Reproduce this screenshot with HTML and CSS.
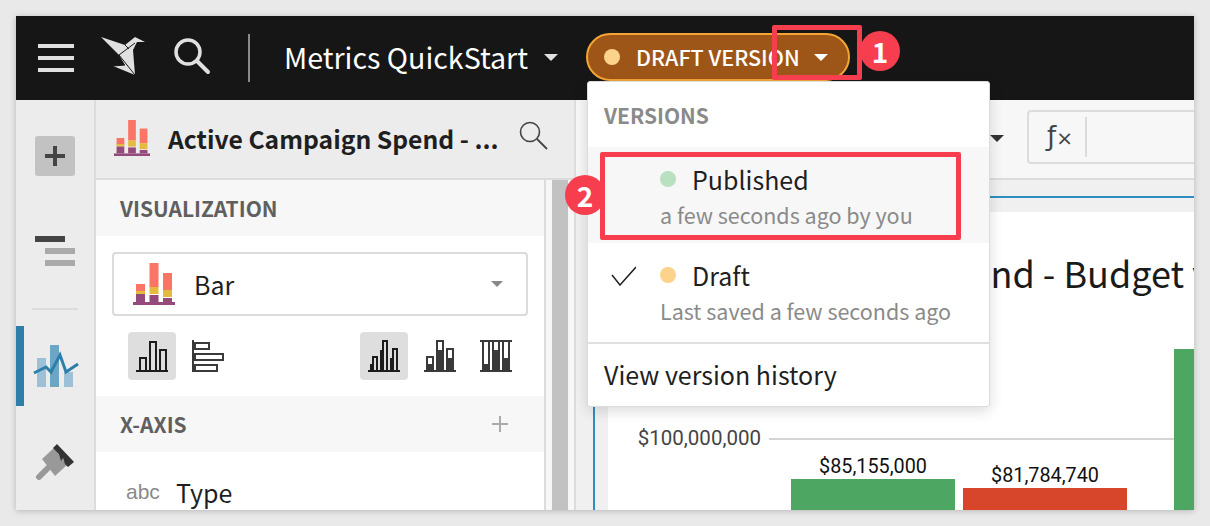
FILE: index.html
```html
<!doctype html>
<html lang="en-US">
<head>
  <meta name="viewport" content="width=device-width, initial-scale=1" charset="utf-8">
  <title>Metrics QuickStart</title>
  <link rel="stylesheet" href="styles.css">
</head>
<body>
  <svg class="defs" width="0" height="0">
    <symbol id="bar-logo" viewBox="0 0 42 42">
      <rect x="3" y="21" width="9" height="8" fill="#fb7566"/>
      <rect x="3" y="28" width="9" height="3" fill="#e3bc3d"/>
      <rect x="3" y="31" width="9" height="8" fill="#954a7c"/>
      <rect x="16.500" y="0" width="9" height="24" fill="#fb7566"/>
      <rect x="16.500" y="24" width="9" height="7" fill="#e3bc3d"/>
      <rect x="16.500" y="32" width="9" height="7" fill="#954a7c"/>
      <rect x="30" y="10" width="9" height="17" fill="#fb7566"/>
      <rect x="30" y="27" width="9" height="7" fill="#e3bc3d"/>
      <rect x="30" y="35" width="9" height="4" fill="#954a7c"/>
      <rect x="0" y="39" width="42" height="3" fill="#954a7c"/>
    </symbol>
  </svg>

  <div class="app">
    <header class="topbar">
      <div class="burger"><span></span><span></span><span></span></div>
      <svg class="logo" width="46" height="40" viewBox="0 0 46 40">
        <polygon points="1,1 25,9 35,1 45,6 37,6 33,14 35,39 13,30 25,29 19,19" fill="#e0e0e0"/>
        <path d="M19 19 L35 7 M19 19 L35 39 M13 30 L25 29 M25 9 L29 13" stroke="#161616" stroke-width="1" fill="none"/>
      </svg>
      <svg class="top-search" width="40" height="40" viewBox="0 0 40 40">
        <circle cx="16" cy="16" r="12" fill="none" stroke="#e0e0e0" stroke-width="3.500"/>
        <line x1="25" y1="25" x2="36" y2="36" stroke="#e0e0e0" stroke-width="4" stroke-linecap="round"/>
      </svg>
      <div class="top-divider"></div>
      <div class="doc-title">Metrics QuickStart</div>
      <span class="caret caret-light"></span>
      <div class="draft-pill">
        <span class="dot dot-draft"></span>
        <span class="pill-label">DRAFT VERSION</span>
        <span class="caret caret-white"></span>
      </div>
    </header>

    <div class="workspace">
      <nav class="rail">
        <div class="rail-add">
          <svg width="20" height="20" viewBox="0 0 20 20"><path d="M8 0h4v8h8v4h-8v8H8v-8H0V8h8z" fill="#444"/></svg>
        </div>
        <div class="rail-lines"><span></span><span></span><span></span></div>
        <div class="rail-rule"></div>
        <div class="rail-chart">
          <svg width="46" height="44" viewBox="0 0 46 44">
            <rect x="4" y="14" width="9" height="29" fill="#9cc0d5"/>
            <rect x="17" y="1" width="9" height="42" fill="#6ba6c5"/>
            <rect x="31" y="28" width="9" height="15" fill="#9cc0d5"/>
            <polyline points="1,29 13,23 18,28 27,11 33,28 45,20" fill="none" stroke="#2d7fa9" stroke-width="3"/>
          </svg>
        </div>
        <div class="rail-brush">
          <svg width="40" height="40" viewBox="0 0 40 40">
            <line x1="4" y1="34" x2="13" y2="25" stroke="#999" stroke-width="6" stroke-linecap="round"/>
            <polygon points="7,16 20,4 32,22 20,33" fill="#999"/>
            <polygon points="22,1 39,19 33,24 30,21 28,15 26,18 24,11 18,5" fill="#333"/>
          </svg>
        </div>
      </nav>

      <section class="panel">
        <div class="panel-head">
          <svg class="panel-logo" width="36" height="36"><use href="#bar-logo"/></svg>
          <div class="panel-title">Active Campaign Spend - ...</div>
          <svg class="panel-search" width="30" height="30" viewBox="0 0 30 30">
            <circle cx="12" cy="12" r="9.500" fill="none" stroke="#444" stroke-width="1.600"/>
            <line x1="19" y1="19" x2="29" y2="29" stroke="#444" stroke-width="1.800"/>
          </svg>
        </div>
        <div class="panel-body">
          <div class="config">
            <h3 class="section-head">VISUALIZATION</h3>
            <div class="chart-select">
              <svg width="42" height="42"><use href="#bar-logo"/></svg>
              <span class="select-label">Bar</span>
              <span class="caret caret-grey"></span>
            </div>
            <div class="variant-row">
              <div class="variant-group">
                <div class="variant active">
                  <svg width="32" height="32" viewBox="0 0 32 32"><path d="M0 30h32v2H0zM3 30V17h8v13h-2V19H5v11zM13 30V1h8v29h-2V3h-4v27zM23 30V9h8v21h-2V11h-4v19z" fill="#1c1c1c"/></svg>
                </div>
                <div class="variant">
                  <svg width="32" height="32" viewBox="0 0 32 32"><path fill-rule="evenodd" d="M0 0h2v32H0zM2 2h16v8H2zM4 4v4h12V4zM2 13h30v8H2zM4 15v4h26v-4zM2 24h24v8H2zM4 26v4h20v-4z" fill="#3a3a3a"/></svg>
                </div>
              </div>
              <div class="variant-group">
                <div class="variant active">
                  <svg width="32" height="32" viewBox="0 0 32 32"><path fill-rule="evenodd" d="M0 30h32v2H0zM2 24h2v6H2zM4 16h6v14H4zM6 18v12h2V18zM12 10h2v20h-2zM14 0h6v30h-6zM16 2v28h2V2zM22 18h2v12h-2zM24 8h6v22h-6zM26 10v20h2V10z" fill="#1c1c1c"/></svg>
                </div>
                <div class="variant">
                  <svg width="32" height="32" viewBox="0 0 32 32"><path fill-rule="evenodd" d="M0 30h32v2H0zM2 16h8v14H2zM4 18v6h4v-6zM12 0h8v30h-8zM14 2v8h4V2zM22 8h8v22h-8zM24 10v8h4v-8z" fill="#3a3a3a"/></svg>
                </div>
                <div class="variant">
                  <svg width="32" height="32" viewBox="0 0 32 32"><path fill-rule="evenodd" d="M0 0h32v2H0zM0 30h32v2H0zM2 2h8v28H2zM4 2v22h4V2zM12 2h8v28h-8zM14 2v8h4V2zM22 2h8v28h-8zM24 2v16h4V2z" fill="#3a3a3a"/></svg>
                </div>
              </div>
            </div>
            <h3 class="section-head">X-AXIS<span class="add-field"></span></h3>
            <div class="field-row">
              <span class="field-type">abc</span>
              <span class="field-name">Type</span>
            </div>
          </div>
          <div class="scroll-track"><div class="scroll-thumb"></div></div>
        </div>
      </section>

      <main class="main">
        <div class="formula-bar">
          <span class="caret caret-dark"></span>
          <div class="formula-box">
            <span class="fx">&#402;<small>&times;</small></span>
            <span class="fx-rule"></span>
          </div>
        </div>
        <div class="sheet">
          <div class="canvas">
            <svg class="chart" width="586" height="298" viewBox="608 212 586 298">
              <text class="chart-title" x="638" y="288">Active Campaign Spend - Budget vs Actual</text>
              <line x1="769" y1="439" x2="1174" y2="439" stroke="#d4d4d4" stroke-width="2"/>
              <text class="axis-label" x="761" y="445" text-anchor="end">$100,000,000</text>
              <rect x="791" y="479" width="164" height="31" fill="#4da661"/>
              <rect x="963" y="488" width="164" height="22" fill="#d7462b"/>
              <rect x="1174" y="349" width="20" height="161" fill="#4da661"/>
              <text class="bar-label" x="873" y="473" text-anchor="middle">$85,155,000</text>
              <text class="bar-label" x="1045" y="482" text-anchor="middle">$81,784,740</text>
            </svg>
          </div>
        </div>
      </main>
    </div>

    <div class="version-menu">
      <div class="menu-head">VERSIONS</div>
      <div class="menu-item selected">
        <div class="item-main"><span class="dot dot-published"></span><span class="item-name">Published</span></div>
        <div class="item-sub">a few seconds ago by you</div>
      </div>
      <div class="menu-item menu-item-last">
        <div class="item-main">
          <svg class="check" width="26" height="24" viewBox="0 0 26 24"><path d="M2 13l8 10L26 5" fill="none" stroke="#222" stroke-width="1.500"/></svg>
          <span class="dot dot-draft"></span><span class="item-name">Draft</span>
        </div>
        <div class="item-sub">Last saved a few seconds ago</div>
      </div>
      <div class="menu-link">View version history</div>
    </div>

    <!-- callouts from the doc author -->
    <div class="callout-box box-one"></div>
    <div class="callout-num num-one">1</div>
    <div class="callout-box box-two"></div>
    <div class="callout-num num-two">2</div>
  </div>
</body>
</html>
```

FILE: styles.css
```css
:root {
  --font-face: "Noto Sans CJK SC", "Noto Sans", sans-serif;
  --rule: #dcdcdc;
  --callout: #f73e4e;
}

html, body {
  margin: 0;
  height: 100%;
  overflow: hidden;
}

body {
  background-color: #e9e9e9;
  padding: 16px;
  box-sizing: border-box;
  font-family: var(--font-face);
  color: #1f1f1f;
}

.defs {
  position: absolute;
}

.app {
  position: relative;
  width: 1178px;
  height: 494px;
  display: flex;
  flex-direction: column;
  overflow: hidden;
  background: #fff;
  box-shadow: 0 1px 6px rgba(0, 0, 0, 0.22);
}

/* top bar */
.topbar {
  flex: 0 0 84px;
  display: flex;
  align-items: center;
  background: #161616;
  padding-left: 22px;
}

.burger {
  width: 36px;
  display: flex;
  flex-direction: column;
  gap: 8px;
}

.burger span {
  height: 4px;
  background: #e0e0e0;
}

.logo {
  margin-left: 26px;
  margin-top: -4px;
}

.top-search {
  margin-left: 26px;
  margin-top: -4px;
}

.top-divider {
  width: 2px;
  height: 48px;
  margin-left: 36px;
  background: #8a8a8a;
}

.doc-title {
  margin-left: 34px;
  margin-top: -3px;
  color: #fff;
  font-size: 28.600px;
  line-height: 40px;
  white-space: nowrap;
}

.caret {
  display: inline-block;
  flex: none;
  width: 0;
  height: 0;
  border-left: 7px solid transparent;
  border-right: 7px solid transparent;
  border-top: 7px solid #fff;
}

.caret-light {
  margin-left: 16px;
  margin-top: -2px;
  border-top-color: #e0e0e0;
}

.draft-pill {
  flex: none;
  margin-left: 28px;
  margin-top: -2px;
  height: 48px;
  width: 264px;
  box-sizing: border-box;
  display: flex;
  align-items: center;
  padding-left: 16px;
  border: 2px solid #f4a536;
  border-radius: 24px;
  background: #9e5618;
}

.pill-label {
  margin-left: 16px;
  color: #fff;
  font-size: 21.500px;
  font-weight: 500;
  line-height: 30px;
  white-space: nowrap;
}

.caret-white {
  margin-left: 14px;
}

.dot {
  flex: none;
  width: 16px;
  height: 16px;
  border-radius: 50%;
}

.dot-draft {
  background: #fdd28a;
}

.dot-published {
  background: #b9e0bf;
}

.workspace {
  flex: 1;
  display: flex;
  min-height: 0;
}

/* left rail */
.rail {
  flex: 0 0 80px;
  box-sizing: border-box;
  display: flex;
  flex-direction: column;
  align-items: center;
  background: #ececec;
  border-right: 2px solid var(--rule);
}

.rail-add {
  width: 40px;
  height: 40px;
  margin-top: 36px;
  display: flex;
  align-items: center;
  justify-content: center;
  background: #c2c2c2;
  border-radius: 3px;
}

.rail-lines {
  width: 40px;
  margin-top: 60px;
  display: flex;
  flex-direction: column;
  gap: 6px;
}

.rail-lines span {
  width: 30px;
  height: 6px;
  margin-left: 10px;
  background: #aaa;
}

.rail-lines span:first-child {
  margin-left: 0;
  background: #444;
}

.rail-rule {
  width: 46px;
  height: 2px;
  margin-top: 42px;
  background: var(--rule);
}

.rail-chart {
  align-self: stretch;
  height: 80px;
  margin-top: 16px;
  box-sizing: border-box;
  display: flex;
  align-items: center;
  padding-left: 9px;
  border-left: 8px solid #2d7fa9;
}

.rail-brush {
  margin-top: 37px;
}

/* data panel */
.panel {
  flex: 0 0 480px;
  min-width: 0;
  box-sizing: border-box;
  display: flex;
  flex-direction: column;
  border-right: 2px solid var(--rule);
}

.panel-head {
  flex: 0 0 80px;
  box-sizing: border-box;
  display: flex;
  align-items: center;
  padding-left: 18px;
  padding-bottom: 2px;
  background: #ececec;
  border-bottom: 2px solid var(--rule);
}

.panel-title {
  margin-left: 18px;
  font-size: 24.700px;
  font-weight: 700;
  line-height: 36px;
  white-space: nowrap;
}

.panel-search {
  position: relative;
  top: -3px;
  margin-left: auto;
  margin-right: 26px;
}

.panel-body {
  flex: 1;
  display: flex;
  min-height: 0;
}

.config {
  flex: 0 0 450px;
  box-sizing: border-box;
  background: #fff;
  border-right: 2px solid var(--rule);
  overflow: hidden;
}

.section-head {
  margin: 0;
  height: 56px;
  display: flex;
  align-items: center;
  justify-content: space-between;
  padding: 0 36px 0 24px;
  background: #f7f7f7;
  color: #5f5f5f;
  font-size: 21px;
  font-weight: 700;
}

.add-field {
  position: relative;
  width: 16px;
  height: 16px;
  background:
    linear-gradient(#aaa, #aaa) center / 16px 2px no-repeat,
    linear-gradient(#aaa, #aaa) center / 2px 16px no-repeat;
}

.chart-select {
  height: 64px;
  margin: 16px;
  box-sizing: border-box;
  display: flex;
  align-items: center;
  padding: 0 23px 0 19px;
  border: 2px solid var(--rule);
  border-radius: 4px;
}

.select-label {
  margin-left: 19px;
  font-size: 25px;
  line-height: 34px;
}

.caret-grey {
  margin-left: auto;
  border-left-width: 6px;
  border-right-width: 6px;
  border-top: 6px solid #888;
}

.variant-row {
  display: flex;
  justify-content: space-between;
  padding: 0 24px 16px 32px;
}

.variant-group {
  display: flex;
  gap: 8px;
}

.variant {
  width: 48px;
  height: 48px;
  display: flex;
  align-items: center;
  justify-content: center;
  border-radius: 4px;
}

.variant.active {
  background: #dedede;
}

.field-row {
  display: flex;
  align-items: center;
  padding: 23px 0 0 30px;
}

.field-type {
  width: 50px;
  color: #8a8a8a;
  font-family: "Liberation Sans", sans-serif;
  font-size: 21px;
}

.field-name {
  font-size: 25px;
  line-height: 34px;
}

.scroll-track {
  flex: 1;
  background: #f7f7f7;
  padding-left: 6px;
}

.scroll-thumb {
  width: 16px;
  height: 100%;
  background: #c2c2c2;
}

/* main area */
.main {
  flex: 1;
  min-width: 0;
  display: flex;
  flex-direction: column;
  background: #f0f0f0;
}

.formula-bar {
  flex: 0 0 80px;
  box-sizing: border-box;
  display: flex;
  align-items: center;
  padding-left: 414px;
  padding-bottom: 4px;
  background: #f7f7f7;
  border-bottom: 2px solid var(--rule);
}

.caret-dark {
  border-top-color: #333;
  margin-top: 2px;
}

.formula-box {
  flex: none;
  width: 240px;
  height: 54px;
  margin-left: 23px;
  box-sizing: border-box;
  display: flex;
  align-items: center;
  padding-left: 18px;
  border: 2px solid var(--rule);
  border-radius: 4px;
}

.fx {
  width: 38px;
  color: #444;
  font-family: "DejaVu Sans", sans-serif;
  font-size: 26px;
  line-height: 36px;
}

.fx small {
  font-size: 20px;
}

.fx-rule {
  width: 2px;
  height: 40px;
  background: var(--rule);
}

.sheet {
  flex: 1;
  min-height: 0;
  margin: 16px 0 0 17px;
  padding: 14px 0 0 13px;
  border-top: 2px solid #2d8fc0;
  border-left: 2px solid #2d8fc0;
}

.canvas {
  height: 100%;
  background: #fff;
  overflow: hidden;
}

.chart {
  display: block;
}

.chart-title {
  font-family: var(--font-face);
  font-size: 36px;
  fill: #1a1a1a;
}

.axis-label {
  font-family: Roboto, sans-serif;
  font-size: 20.500px;
  fill: #444;
}

.bar-label {
  font-family: Roboto, sans-serif;
  font-size: 19.800px;
  fill: #111;
}

/* version dropdown */
.version-menu {
  position: absolute;
  left: 571px;
  top: 65px;
  width: 403px;
  height: 326px;
  box-sizing: border-box;
  background: #fff;
  border: 1px solid #dcdcdc;
  border-radius: 3px;
  box-shadow: 0 4px 14px rgba(0, 0, 0, 0.14);
}

.menu-head {
  height: 65px;
  box-sizing: border-box;
  padding: 18px 0 0 16px;
  color: #8a8a8a;
  font-size: 21px;
  font-weight: 700;
  line-height: 30px;
}

.menu-item {
  height: 96px;
  box-sizing: border-box;
  padding-top: 14px;
}

.menu-item-last {
  height: 99px;
}

.menu-item.selected {
  background: #f7f7f7;
}

.item-main {
  display: flex;
  align-items: center;
  padding-left: 72px;
  position: relative;
  height: 36px;
}

.check {
  position: absolute;
  left: 22px;
  top: 5px;
}

.item-name {
  margin-left: 16px;
  font-size: 25px;
  line-height: 34px;
}

.item-sub {
  padding-left: 72px;
  margin-top: 2px;
  color: #8a8a8a;
  font-size: 21.500px;
  line-height: 32px;
}

.menu-link {
  border-top: 2px solid #e0e0e0;
  height: 62px;
  box-sizing: border-box;
  padding: 13px 0 0 16px;
  font-size: 25px;
  line-height: 34px;
}

/* red callouts */
.callout-box {
  position: absolute;
  box-sizing: border-box;
  border: 5px solid var(--callout);
  border-radius: 2px;
}

.box-one {
  left: 756px;
  top: 9px;
  width: 90px;
  height: 55px;
}

.box-two {
  left: 584px;
  top: 136px;
  width: 361px;
  height: 88px;
}

.callout-num {
  position: absolute;
  width: 40px;
  height: 40px;
  border-radius: 50%;
  background: var(--callout);
  color: #fff;
  font-size: 28px;
  font-weight: 700;
  line-height: 40px;
  text-align: center;
}

.num-one {
  left: 844px;
  top: 15px;
}

.num-two {
  left: 549px;
  top: 159px;
}
```
